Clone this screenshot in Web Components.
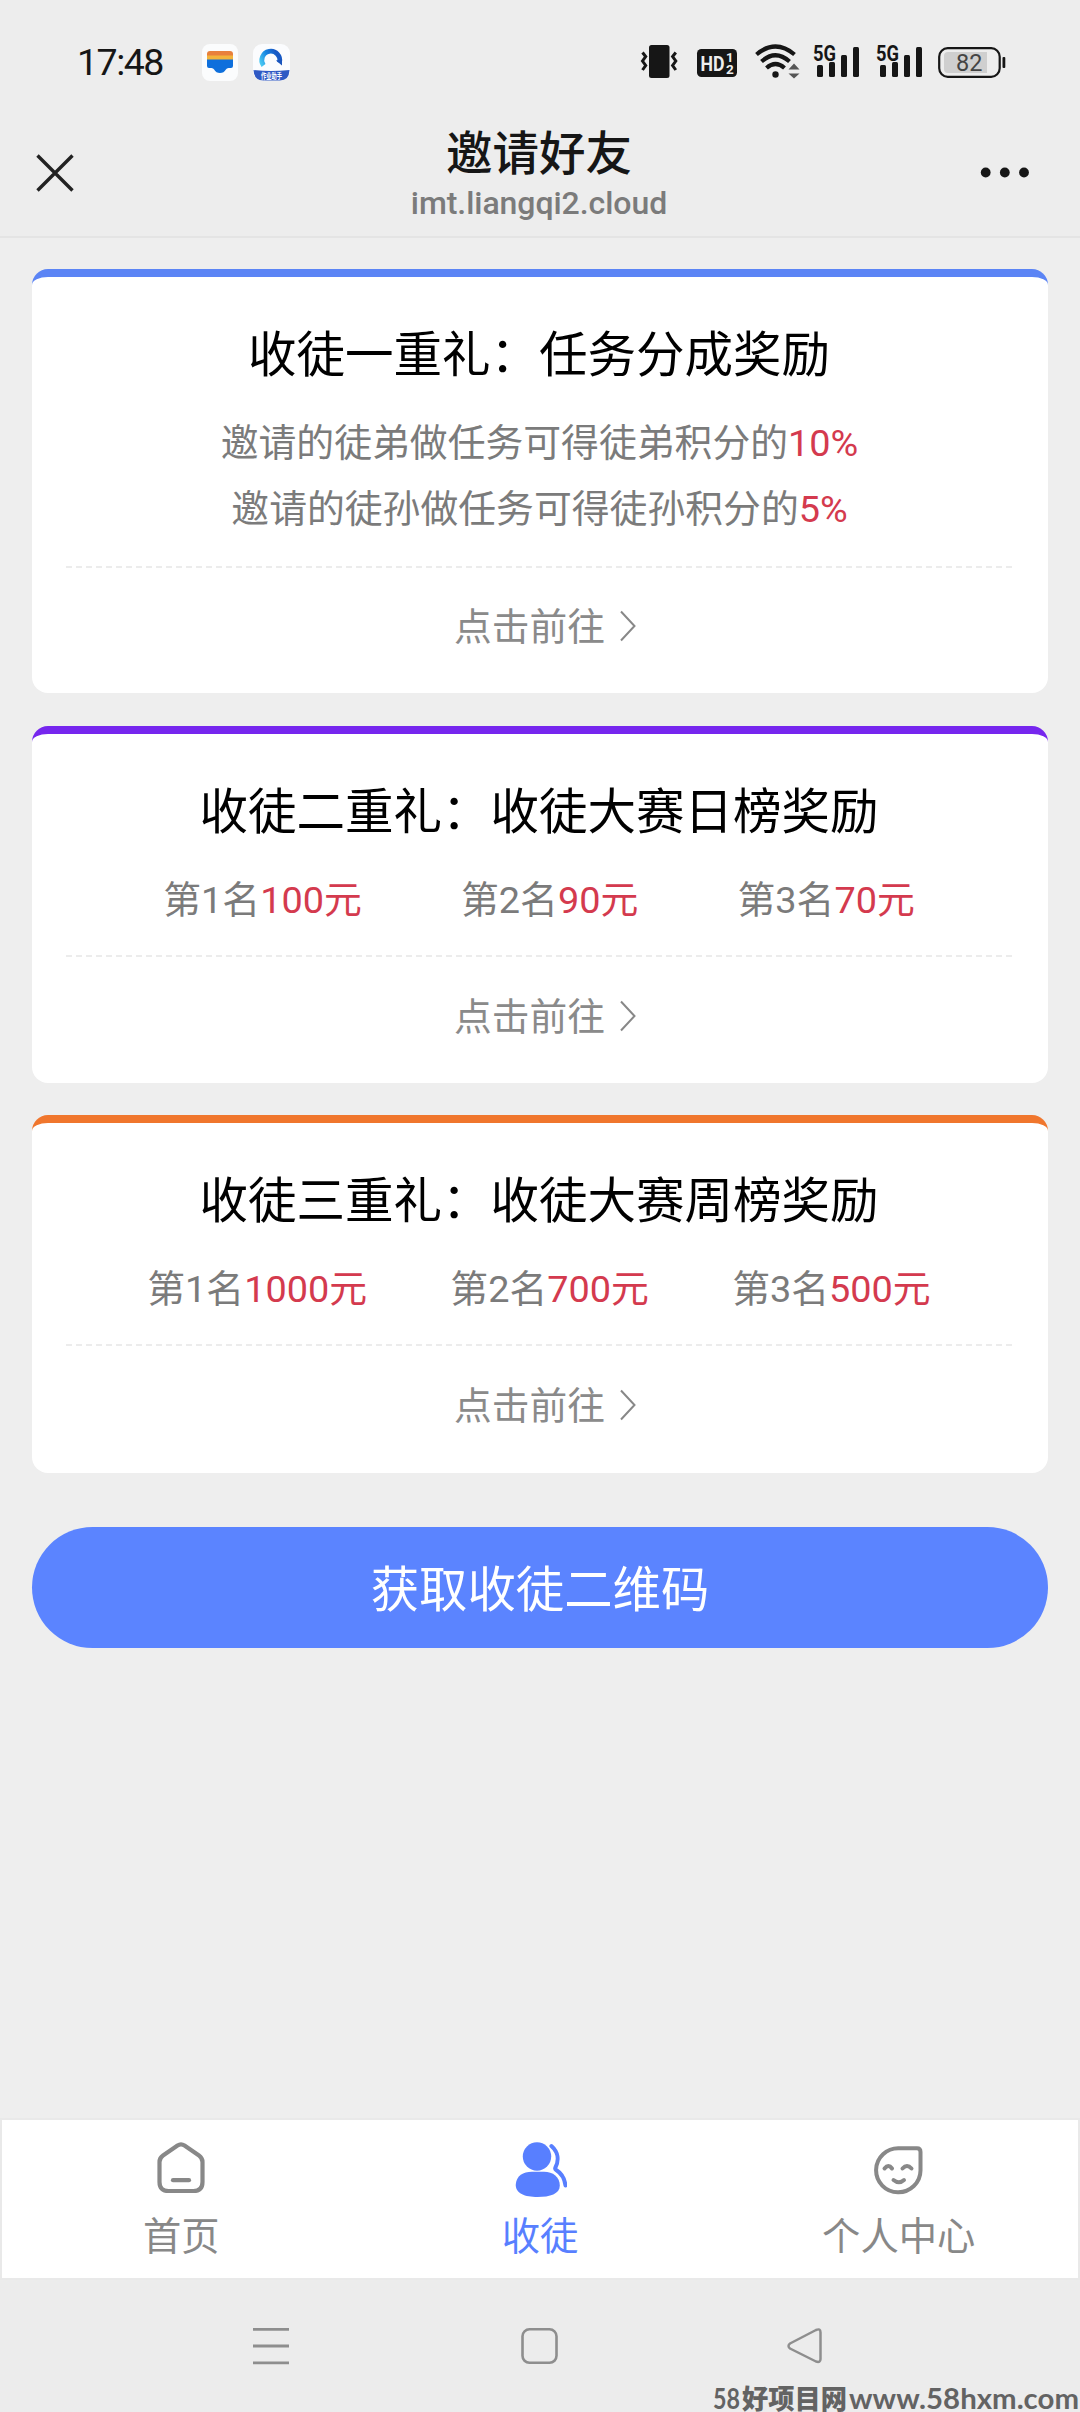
<!DOCTYPE html>
<html lang="zh-CN">
<head>
<meta charset="utf-8">
<title>邀请好友</title>
<style>
html, body { margin: 0; padding: 0; }
body { width: 1080px; height: 2412px; background: #eeeeee; overflow: hidden; font-family: Roboto, "Noto Sans CJK SC", sans-serif; }
</style>
</head>
<body>
<invite-app></invite-app>
<script>
const define = (name, html) => customElements.define(name, class extends HTMLElement {
  constructor() {
    super();
    const t = document.createElement('template');
    t.innerHTML = html;
    this.attachShadow({ mode: 'open' }).appendChild(t.content.cloneNode(true));
  }
});

const signal = (ml) => `<svg style="margin-left:${ml}px" width="47" height="34" viewBox="0 0 47 34" fill="#161616">
  <text x="0" y="17" font-family="Roboto" font-weight="700" font-size="21.5" textLength="23" lengthAdjust="spacingAndGlyphs">5G</text>
  <rect x="4" y="21" width="6" height="12" rx="1.5"/><rect x="16" y="18" width="6" height="15" rx="1.5"/>
  <rect x="28" y="11" width="6" height="22" rx="1.5"/><rect x="40" y="3" width="6" height="30" rx="1.5"/></svg>`;

define('status-bar', `<style>
:host { display: flex; align-items: flex-start; height: 112px; box-sizing: border-box; padding: 44px 74px 0 77px; color: #161616; }
.time { width: 88px; margin-top: -5px; font-size: 37.5px; line-height: 46px; letter-spacing: -1.5px; white-space: nowrap; }
svg { display: block; flex: none; overflow: visible; }
.apps { display: flex; gap: 15px; margin-left: 37px; }
.right { display: flex; margin-left: auto; }
</style>
<div class="time">17:48</div>
<div class="apps">
<svg width="36" height="37" viewBox="0 0 36 37"><rect width="36" height="37" rx="8" fill="#fbfcfd"/>
<path d="M5 15V10q0-3 3-3h20q3 0 3 3v5z" fill="#e8803c"/><rect x="5" y="11.5" width="26" height="5" fill="#f3b33c"/>
<path d="M5 15.5H31V22q0 2-2 2h-2.500q-1.800 0-2.600 1.500-2 3.500-5.900 3.500t-5.900-3.500q-.8-1.500-2.600-1.500H7q-2 0-2-2z" fill="#0e6fdc"/></svg>
<svg width="37" height="38" viewBox="0 0 37 38"><defs><linearGradient id="g" x1="0" y1="1" x2="1" y2="0.6"><stop offset="0" stop-color="#49c8f2"/><stop offset=".5" stop-color="#1686e2"/><stop offset="1" stop-color="#1758c4"/></linearGradient></defs>
<rect width="37" height="36.500" rx="9" fill="#fbfcfe"/>
<path d="M10.500 21.500A9 9 0 1 1 26.500 18.500" fill="none" stroke="url(#g)" stroke-width="4.800"/><path d="M23 16.500l6-1v6z" fill="#1a55bd"/>
<path d="M.5 26Q18 28 36.500 26 36 36.500 27 36.500H10Q1 36.500 .5 26z" fill="#2f59c4"/>
<text x="8" y="34.500" font-size="8" font-weight="700" fill="#fff" font-family="Noto Sans CJK SC" textLength="21" lengthAdjust="spacingAndGlyphs">作业助手</text></svg>
</div>
<div class="right">
<svg width="36" height="36" viewBox="0 0 36 36"><rect x="8" y="1" width="20.500" height="33" rx="2.500" fill="#161616"/><g fill="none" stroke="#161616" stroke-width="3"><path d="M1.500 8.500l3.200 4-3.200 4.500 3.200 4.500-3.200 4.500M34.800 8.500l-3.200 4 3.200 4.500-3.200 4.500 3.200 4.500"/></g></svg>
<svg style="margin-left:20px" width="40" height="36" viewBox="0 0 40 36"><rect x="0" y="5" width="40" height="28" rx="4.500" fill="#161616"/><g fill="#eee" font-family="Roboto" font-weight="700"><text x="3.500" y="26.500" font-size="21" textLength="24" lengthAdjust="spacingAndGlyphs">HD</text><text x="29" y="18" font-size="13">1</text><text x="29" y="29.800" font-size="13.500">2</text></g></svg>
<svg style="margin-left:18px" width="45" height="36" viewBox="0 0 45 36"><g fill="none" stroke="#161616" stroke-width="4.200"><path d="M1.500 10.500Q20.500-5.500 39.500 10.500M6.500 17.500Q20.500 5 34.500 17.500M11.500 24Q20.500 16 29.500 24"/></g><circle cx="20.500" cy="30.500" r="3.200" fill="#161616"/><path d="M39 19.500l5.500 6h-11zM39 34.500l5.500-5h-11z" fill="#555"/></svg>
${signal(13)}${signal(16)}
<svg style="margin-left:15px" width="68" height="36" viewBox="0 0 68 36"><rect x="1.200" y="4.200" width="60.500" height="28.600" rx="8.500" fill="none" stroke="#161616" stroke-width="2.200"/><path d="M10 8H49V29H10q-4 0-4-4V12q0-4 4-4z" fill="#cfcfcf"/><rect x="64.500" y="13" width="2.800" height="11" rx="1" fill="#161616"/><text x="18" y="27" font-family="Roboto" font-size="23.500" fill="#444">82</text></svg>
</div>`);

define('title-bar', `<style>
:host { display: grid; grid-template-columns: 1fr auto 1fr; height: 126px; box-sizing: border-box; border-bottom: 2px solid #e4e4e4; }
.close { margin: 42px 0 0 36px; } .more { margin: 55px 50px 0 auto; }
svg { display: block; }
.mid { display: flex; flex-direction: column; align-items: center; padding-top: 13px; margin-left: -2px; }
.t { font-size: 46.5px; line-height: 50px; font-weight: 500; color: #161616; font-family: "Noto Sans CJK SC", sans-serif; }
.u { font-size: 32px; line-height: 38px; color: #7b7b7b; font-weight: 500; margin-top: 9px; letter-spacing: -0.05px; }
</style>
<svg class="close" width="38" height="38" viewBox="0 0 38 38"><path d="M1.500 1.500l35 35M36.500 1.500l-35 35" stroke="#222" stroke-width="3.400"/></svg>
<div class="mid"><div class="t"><slot></slot></div><div class="u"><slot name="url"></slot></div></div>
<svg class="more" width="50" height="12" viewBox="0 0 50 12" fill="#161616"><circle cx="5.700" cy="5.500" r="4.900"/><circle cx="24.800" cy="5.500" r="4.900"/><circle cx="44" cy="5.500" r="4.900"/></svg>`);

define('gift-card', `<style>
:host { display: flex; flex-direction: column; box-sizing: border-box; background: #fff; border-top: 8px solid var(--accent); border-radius: 16px; padding: 43px 34px 0; text-align: center; }
.h { font-size: 48.5px; line-height: 72px; color: #000; white-space: nowrap; margin-left: -2px; }
.b { margin-top: 18px; font-size: 37.85px; line-height: 66px; color: #7b7b7b; }
.line { height: 2px; margin-top: var(--gap, 24px); background: repeating-linear-gradient(90deg, #ececec 0 6px, transparent 6px 10px); }
.go { display: flex; justify-content: center; align-items: center; gap: 14px; height: 118px; padding: 0 0 8px 11px; color: #8a8a8a; font-size: 37.75px; }
.go span { margin-top: -6px; }
</style>
<div class="h"><slot name="title"></slot></div>
<div class="b"><slot></slot></div>
<div class="line"></div>
<div class="go"><span>点击前往</span><svg width="18" height="32" viewBox="0 0 18 32"><path d="M2 1.500L15.500 16 2 30.500" fill="none" stroke="#888" stroke-width="2"/></svg></div>`);

define('red-text', `<style>:host { display: inline; color: #d43a4e; }</style><slot></slot>`);
define('desc-line', `<style>:host { display: block; white-space: nowrap; margin-left: -1px; }</style><slot></slot>`);
define('rank-row', `<style>:host { display: flex; justify-content: space-evenly; white-space: nowrap; margin-left: -2px; }</style><slot></slot>`);

define('main-button', `<style>:host { display: flex; align-items: center; justify-content: center; box-sizing: border-box; height: 121px; padding-bottom: 3px; border-radius: 61px; background: #5b84ff; color: #fff; font-size: 48.4px; }</style><slot></slot>`);

define('tab-item', `<style>:host { flex: 1 1 0; display: flex; flex-direction: column; align-items: center; color: #888; font-size: 38.3px; }
:host([active]) { color: #587fff; }
.i { height: 64px; display: flex; align-items: flex-start; } .l { line-height: 56px; margin-top: 3px; white-space: nowrap; }</style>
<div class="i"><slot name="icon"></slot></div><div class="l"><slot></slot></div>`);

define('tab-bar', `<style>:host { display: flex; box-sizing: border-box; height: 162px; padding-top: 22px; background: #fff; border: 2px solid #e9e9e9; } svg { display: block; }</style>
<tab-item><svg slot="icon" width="50" height="56" viewBox="0 0 50 56" fill="none" stroke="#888" stroke-width="4.200" stroke-linecap="round"><path d="M21.500 3.500q3.500-2.300 7 0L43 13.500q3.500 2.500 3.500 6.500V40q0 9-9 9h-25q-9 0-9-9V20q0-4 3.500-6.500z"/><path d="M17 38.200H33"/></svg>首页</tab-item>
<tab-item active><svg slot="icon" width="54" height="56" viewBox="0 0 54 56" fill="#587fff"><circle cx="24" cy="14.500" r="14.200"/><path d="M2.800 42C3.500 34 10 29.800 19 29.800H31C40 29.800 46.800 35 46.800 43.500 46.800 52 37 55 24.500 55S2 51.500 2.800 42z"/><path d="M39.200 4C46 10 47 18 43.200 25.500Q42.500 27 44 28 52 33 53.300 43.500" transform="translate(-.8 0)" fill="none" stroke="#587fff" stroke-width="4" stroke-linecap="round" stroke-linejoin="round"/></svg>收徒</tab-item>
<tab-item><svg slot="icon" width="50" height="56" viewBox="0 0 50 56" fill="none" stroke="#888" stroke-width="4" stroke-linecap="round"><path d="M25 6.300H43Q46.500 6.300 46.500 10V28.500A22.200 22 0 1 1 25 6.300z"/><path d="M10.500 26.500q4-5 7.500 0M28.500 26.500q4.500-5 9 0M19.500 38q5.500 4.500 10.500 0" stroke-width="4"/></svg>个人中心</tab-item>`);

define('nav-bar', `<style>:host { display: flex; flex-direction: column; height: 132px; background: #ececec; } .k { display: grid; grid-template-columns: 36px 36px 36px; column-gap: 231.5px; padding: 46px 0 0 253px; height: 59px; } svg { display: block; overflow: visible; }
.w { align-self: flex-end; }</style>
<div class="k">
<svg width="36" height="38" viewBox="0 0 36 38"><path d="M0 3.400H36M0 20H36M0 36.800H36" stroke="#8e8e8e" stroke-width="2.800"/></svg>
<svg width="37" height="38" viewBox="0 0 37 38"><rect x="1.500" y="3.300" width="34" height="33.500" rx="7" fill="none" stroke="#8e8e8e" stroke-width="2.600"/></svg>
<svg width="36" height="38" viewBox="0 0 36 38"><path d="M28 4Q32.500 2 32.500 6.500V33Q32.500 37 28 35.500L2 22.500Q-1 20 2 17.500z" fill="none" stroke="#8e8e8e" stroke-width="2.500" stroke-linejoin="round"/></svg>
</div>
<svg class="w" width="368" height="27" viewBox="0 0 368 27" fill="#636363" font-weight="700" font-family="Lato, Noto Sans CJK SC">
<text x="1" y="24" font-size="28" textLength="27" lengthAdjust="spacingAndGlyphs">58</text><text x="30" y="24" font-size="27" font-weight="900" font-family="Noto Sans CJK SC" textLength="105" lengthAdjust="spacingAndGlyphs">好项目网</text><text x="137" y="24" font-size="28.500" textLength="230" lengthAdjust="spacingAndGlyphs">www.58hxm.com</text></svg>`);

define('invite-app', `<style>
:host { display: flex; flex-direction: column; width: 1080px; height: 2412px; background: #eee; }
header { background: #ededed; }
main { flex: 1; padding: 31px 32px 0; display: flex; flex-direction: column; }
.c1 { height: 424px; margin-bottom: 33px; } .c2 { height: 357px; margin-bottom: 32px; --gap: 22px; } .c3 { height: 358px; margin-bottom: 54px; --gap: 22px; }
</style>
<header><status-bar></status-bar><title-bar>邀请好友<span slot="url">imt.liangqi2.cloud</span></title-bar></header>
<main>
<gift-card class="c1" style="--accent:#5b84f5"><span slot="title">收徒一重礼：任务分成奖励</span>
<desc-line>邀请的徒弟做任务可得徒弟积分的<red-text>10%</red-text></desc-line><desc-line>邀请的徒孙做任务可得徒孙积分的<red-text>5%</red-text></desc-line></gift-card>
<gift-card class="c2" style="--accent:#7626ee"><span slot="title">收徒二重礼：收徒大赛日榜奖励</span>
<rank-row><span>第1名<red-text>100元</red-text></span><span>第2名<red-text>90元</red-text></span><span>第3名<red-text>70元</red-text></span></rank-row></gift-card>
<gift-card class="c3" style="--accent:#f0762d"><span slot="title">收徒三重礼：收徒大赛周榜奖励</span>
<rank-row><span>第1名<red-text>1000元</red-text></span><span>第2名<red-text>700元</red-text></span><span>第3名<red-text>500元</red-text></span></rank-row></gift-card>
<main-button>获取收徒二维码</main-button>
</main>
<tab-bar></tab-bar>
<nav-bar></nav-bar>`);
</script>
</body>
</html>
